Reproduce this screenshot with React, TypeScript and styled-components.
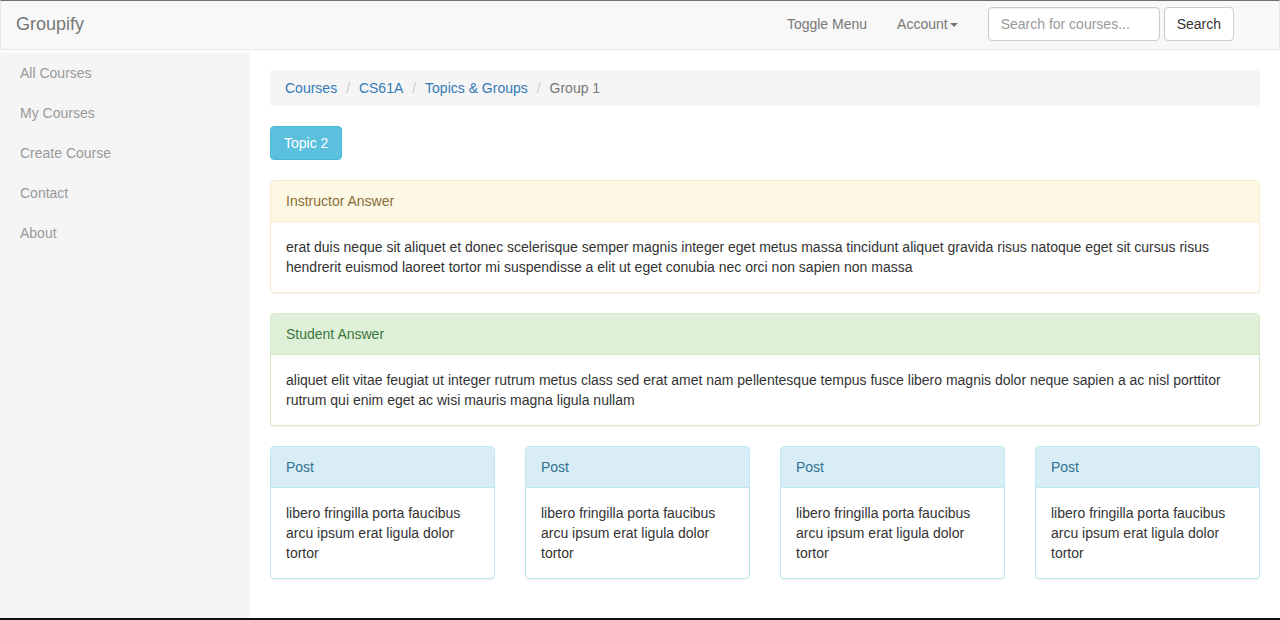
import styled, { createGlobalStyle } from 'styled-components'

const GlobalStyle = createGlobalStyle`
  html, body {
    margin: 0;
    padding: 0;
    background: #fff;
  }
  body {
    font-family: 'Liberation Sans', Arial, Helvetica, sans-serif;
    font-size: 14px;
    line-height: 20px;
    color: #333;
  }
  * {
    box-sizing: border-box;
  }
`

const Page = styled.div`
  height: 620px;
  display: flex;
  flex-direction: column;
  border-bottom: 2px solid #111;
  overflow: hidden;
`

const Navbar = styled.nav`
  height: 50px;
  flex: none;
  display: flex;
  align-items: center;
  background: #f8f8f8;
  border: 1px solid #e7e7e7;
  border-top-color: #707070;
  padding: 0 45px 2px 15px;
`

const Brand = styled.a`
  font-size: 18px;
  line-height: 20px;
  color: #777;
  text-decoration: none;
  margin-right: auto;
`

const NavLink = styled.a`
  display: flex;
  align-items: center;
  padding: 0 15px;
  color: #777;
  text-decoration: none;
  line-height: 20px;
`

const Caret = styled.span`
  display: inline-block;
  width: 0;
  height: 0;
  margin-left: 2px;
  margin-top: 1px;
  border-top: 4px solid #777;
  border-left: 4px solid transparent;
  border-right: 4px solid transparent;
`

const SearchForm = styled.form`
  display: flex;
  align-items: center;
  gap: 4px;
  padding-left: 15px;
`

const SearchInput = styled.input`
  width: 172px;
  height: 34px;
  padding: 6px 12px;
  font: inherit;
  color: #555;
  background: #fff;
  border: 1px solid #ccc;
  border-radius: 4px;
  box-shadow: inset 0 1px 1px rgba(0, 0, 0, 0.075);
  outline: none;

  &::placeholder {
    color: #999;
  }
`

const Button = styled.button<{ $variant?: 'default' | 'info' }>`
  height: 34px;
  padding: 6px 12px;
  font: inherit;
  line-height: 20px;
  border-radius: 4px;
  cursor: pointer;
  color: ${(p) => (p.$variant === 'info' ? '#fff' : '#333')};
  background: ${(p) => (p.$variant === 'info' ? '#5bc0de' : '#fff')};
  border: 1px solid ${(p) => (p.$variant === 'info' ? '#46b8da' : '#ccc')};
`

const TopicButton = styled(Button)`
  padding: 6px 13px;
  margin-bottom: 20px;
`

const Body = styled.div`
  flex: 1;
  display: flex;
  min-height: 0;
`

const Sidebar = styled.ul`
  width: 250px;
  flex: none;
  margin: 3px 0 0;
  padding: 0;
  list-style: none;
  background: #f5f5f5;
`

const SideItem = styled.li`
  padding: 10px 20px;
  color: #999;
`

const Main = styled.main`
  flex: 1;
  padding: 20px;
  min-width: 0;
`

const Breadcrumb = styled.ol`
  display: flex;
  margin: 0 0 20px;
  padding: 8px 15px;
  list-style: none;
  background: #f5f5f5;
  border-radius: 4px;

  li + li::before {
    content: '/\\00a0';
    padding: 0 5px 0 9px;
    color: #ccc;
  }
`

const Crumb = styled.li<{ $active?: boolean }>`
  color: ${(p) => (p.$active ? '#777' : '#337ab7')};
`

const Panel = styled.section<{ $tone: 'warning' | 'success' | 'info' }>`
  margin-bottom: 20px;
  background: #fff;
  border-radius: 4px;
  box-shadow: 0 1px 1px rgba(0, 0, 0, 0.05);
  border: 1px solid ${(p) => tones[p.$tone].border};
`

const PanelHeading = styled.div<{ $tone: 'warning' | 'success' | 'info' }>`
  padding: 10px 15px;
  border-bottom: 1px solid ${(p) => tones[p.$tone].border};
  border-radius: 3px 3px 0 0;
  background: ${(p) => tones[p.$tone].bg};
  color: ${(p) => tones[p.$tone].text};
`

const PanelBody = styled.div`
  padding: 15px;
`

const PostGrid = styled.div`
  display: grid;
  grid-template-columns: repeat(4, 1fr);
  gap: 30px;
`

const tones = {
  warning: { bg: '#fcf8e3', text: '#8a6d3b', border: '#faebcc' },
  success: { bg: '#dff0d8', text: '#3c763d', border: '#d6e9c6' },
  info: { bg: '#d9edf7', text: '#31708f', border: '#bce8f1' },
}

const sideLinks = ['All Courses', 'My Courses', 'Create Course', 'Contact', 'About']

export default function App() {
  return (
    <Page>
      <GlobalStyle />
      <Navbar>
        <Brand>Groupify</Brand>
        <NavLink>Toggle Menu</NavLink>
        <NavLink>
          Account
          <Caret />
        </NavLink>
        <SearchForm onSubmit={(e) => e.preventDefault()}>
          <SearchInput placeholder="Search for courses..." />
          <Button type="submit">Search</Button>
        </SearchForm>
      </Navbar>
      <Body>
        <Sidebar>
          {sideLinks.map((l) => (
            <SideItem key={l}>{l}</SideItem>
          ))}
        </Sidebar>
        <Main>
          <Breadcrumb>
            <Crumb>Courses</Crumb>
            <Crumb>CS61A</Crumb>
            <Crumb>Topics &amp; Groups</Crumb>
            <Crumb $active>Group 1</Crumb>
          </Breadcrumb>
          <TopicButton $variant="info">Topic 2</TopicButton>
          <Panel $tone="warning">
            <PanelHeading $tone="warning">Instructor Answer</PanelHeading>
            <PanelBody>
              erat duis neque sit aliquet et donec scelerisque semper magnis integer eget metus massa
              tincidunt aliquet gravida risus natoque eget sit cursus risus hendrerit euismod laoreet
              tortor mi suspendisse a elit ut eget conubia nec orci non sapien non massa
            </PanelBody>
          </Panel>
          <Panel $tone="success">
            <PanelHeading $tone="success">Student Answer</PanelHeading>
            <PanelBody>
              aliquet elit vitae feugiat ut integer rutrum metus class sed erat amet nam pellentesque
              tempus fusce libero magnis dolor neque sapien a ac nisl porttitor rutrum qui enim eget
              ac wisi mauris magna ligula nullam
            </PanelBody>
          </Panel>
          <PostGrid>
            {[0, 1, 2, 3].map((i) => (
              <Panel $tone="info" key={i}>
                <PanelHeading $tone="info">Post</PanelHeading>
                <PanelBody>libero fringilla porta faucibus arcu ipsum erat ligula dolor tortor</PanelBody>
              </Panel>
            ))}
          </PostGrid>
        </Main>
      </Body>
    </Page>
  )
}
